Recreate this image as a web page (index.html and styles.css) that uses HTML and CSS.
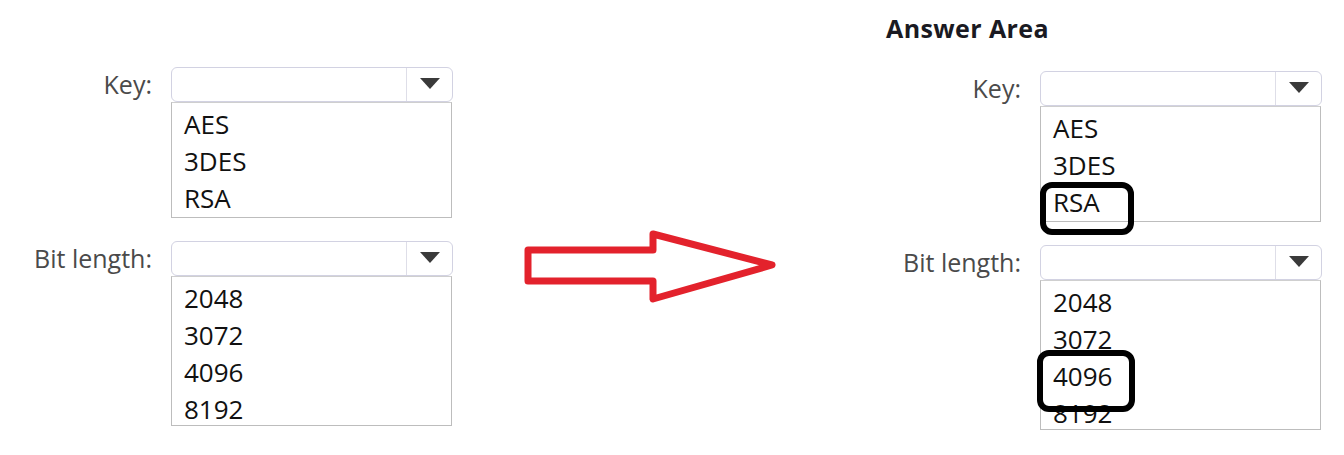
FILE: index.html
```html
<!DOCTYPE html>
<html>
<head>
<meta charset="utf-8">
<link rel="stylesheet" href="styles.css">
</head>
<body>
<div class="page">
  <div class="panel panel-left">
    <div class="form">
      <div class="row">
        <div class="label">Key:</div>
        <div class="field">
          <div class="select"><span class="select-value"></span><span class="select-btn"><span class="tri"></span></span></div>
          <ul class="list list-key">
            <li>AES</li>
            <li>3DES</li>
            <li>RSA</li>
          </ul>
        </div>
      </div>
      <div class="row">
        <div class="label">Bit length:</div>
        <div class="field">
          <div class="select"><span class="select-value"></span><span class="select-btn"><span class="tri"></span></span></div>
          <ul class="list list-bits">
            <li>2048</li>
            <li>3072</li>
            <li>4096</li>
            <li>8192</li>
          </ul>
        </div>
      </div>
    </div>
  </div>

  <div class="arrow-wrap">
    <svg class="arrow" width="258" height="78" viewBox="0 0 258 78">
      <polygon points="6,22 131,22 131,6 250,37 131,71 131,53 6,53" fill="none" stroke="#e3222c" stroke-width="7" stroke-linejoin="round"/>
    </svg>
  </div>

  <div class="panel panel-right">
    <h2 class="heading">Answer Area</h2>
    <div class="form">
      <div class="row">
        <div class="label">Key:</div>
        <div class="field">
          <div class="select"><span class="select-value"></span><span class="select-btn"><span class="tri"></span></span></div>
          <ul class="list list-key">
            <li>AES</li>
            <li>3DES</li>
            <li class="picked picked-rsa">RSA</li>
          </ul>
        </div>
      </div>
      <div class="row">
        <div class="label">Bit length:</div>
        <div class="field">
          <div class="select"><span class="select-value"></span><span class="select-btn"><span class="tri"></span></span></div>
          <ul class="list list-bits">
            <li>2048</li>
            <li>3072</li>
            <li class="picked picked-4096">4096</li>
            <li>8192</li>
          </ul>
        </div>
      </div>
    </div>
  </div>
</div>
</body>
</html>
```

FILE: styles.css
```css
* { box-sizing: border-box; }
html, body { margin: 0; padding: 0; background: #fff; }
body {
  font-family: "Open Sans", "Noto Sans", "DejaVu Sans", sans-serif;
  width: 1344px;
  height: 455px;
  overflow: hidden;
}
.page {
  display: flex;
  align-items: flex-start;
}
.panel-left {
  width: 470px;
  padding-top: 67px;
}
.panel-left .label { width: 152px; }
.arrow-wrap {
  margin-left: 52px;
  margin-top: 228px;
  width: 258px;
  height: 78px;
}
.arrow { display: block; }
.panel-right {
  margin-left: 90px;
  padding-top: 15px;
}
.panel-right .label { width: 151px; }
.heading {
  margin: 0 0 29px 16px;
  font-size: 25px;
  font-weight: 700;
  color: #1a1a22;
  line-height: 27px;
  letter-spacing: 0.4px;
}
.form {
  display: flex;
  flex-direction: column;
  gap: 23px;
}
.row {
  display: flex;
  column-gap: 19px;
  align-items: flex-start;
}
.label {
  text-align: right;
  font-size: 25px;
  line-height: 34px;
  color: #4a4a4a;
  white-space: nowrap;
}
.field { width: 282px; }
.select {
  height: 35px;
  border: 1px solid #d2d2e2;
  border-radius: 6px;
  display: flex;
  background: #fff;
}
.select-value { flex: 1; }
.select-btn {
  width: 46px;
  border-left: 1px solid #dedee8;
  display: flex;
  align-items: flex-start;
  justify-content: center;
  padding-top: 10px;
}
.tri {
  width: 0;
  height: 0;
  border-left: 10px solid transparent;
  border-right: 10px solid transparent;
  border-top: 11px solid #3a3a3a;
}
.list {
  list-style: none;
  margin: 0;
  padding: 3px 0 0 12px;
  width: 281px;
  border: 1px solid #bdbdbd;
  border-top-color: #cfcfcf;
}
.list-key { height: 116px; }
.list-bits { height: 150px; }
.list li {
  font-size: 26px;
  line-height: 37px;
  color: #111;
}
.picked { position: relative; }
.picked::after {
  content: "";
  position: absolute;
  border: 6px solid #000;
  border-radius: 12px;
}
.picked-rsa::after {
  left: -13px;
  top: -2px;
  width: 82px;
  height: 41px;
}
.picked-4096::after {
  left: -16px;
  top: -8px;
  width: 86px;
  height: 50px;
}
```
